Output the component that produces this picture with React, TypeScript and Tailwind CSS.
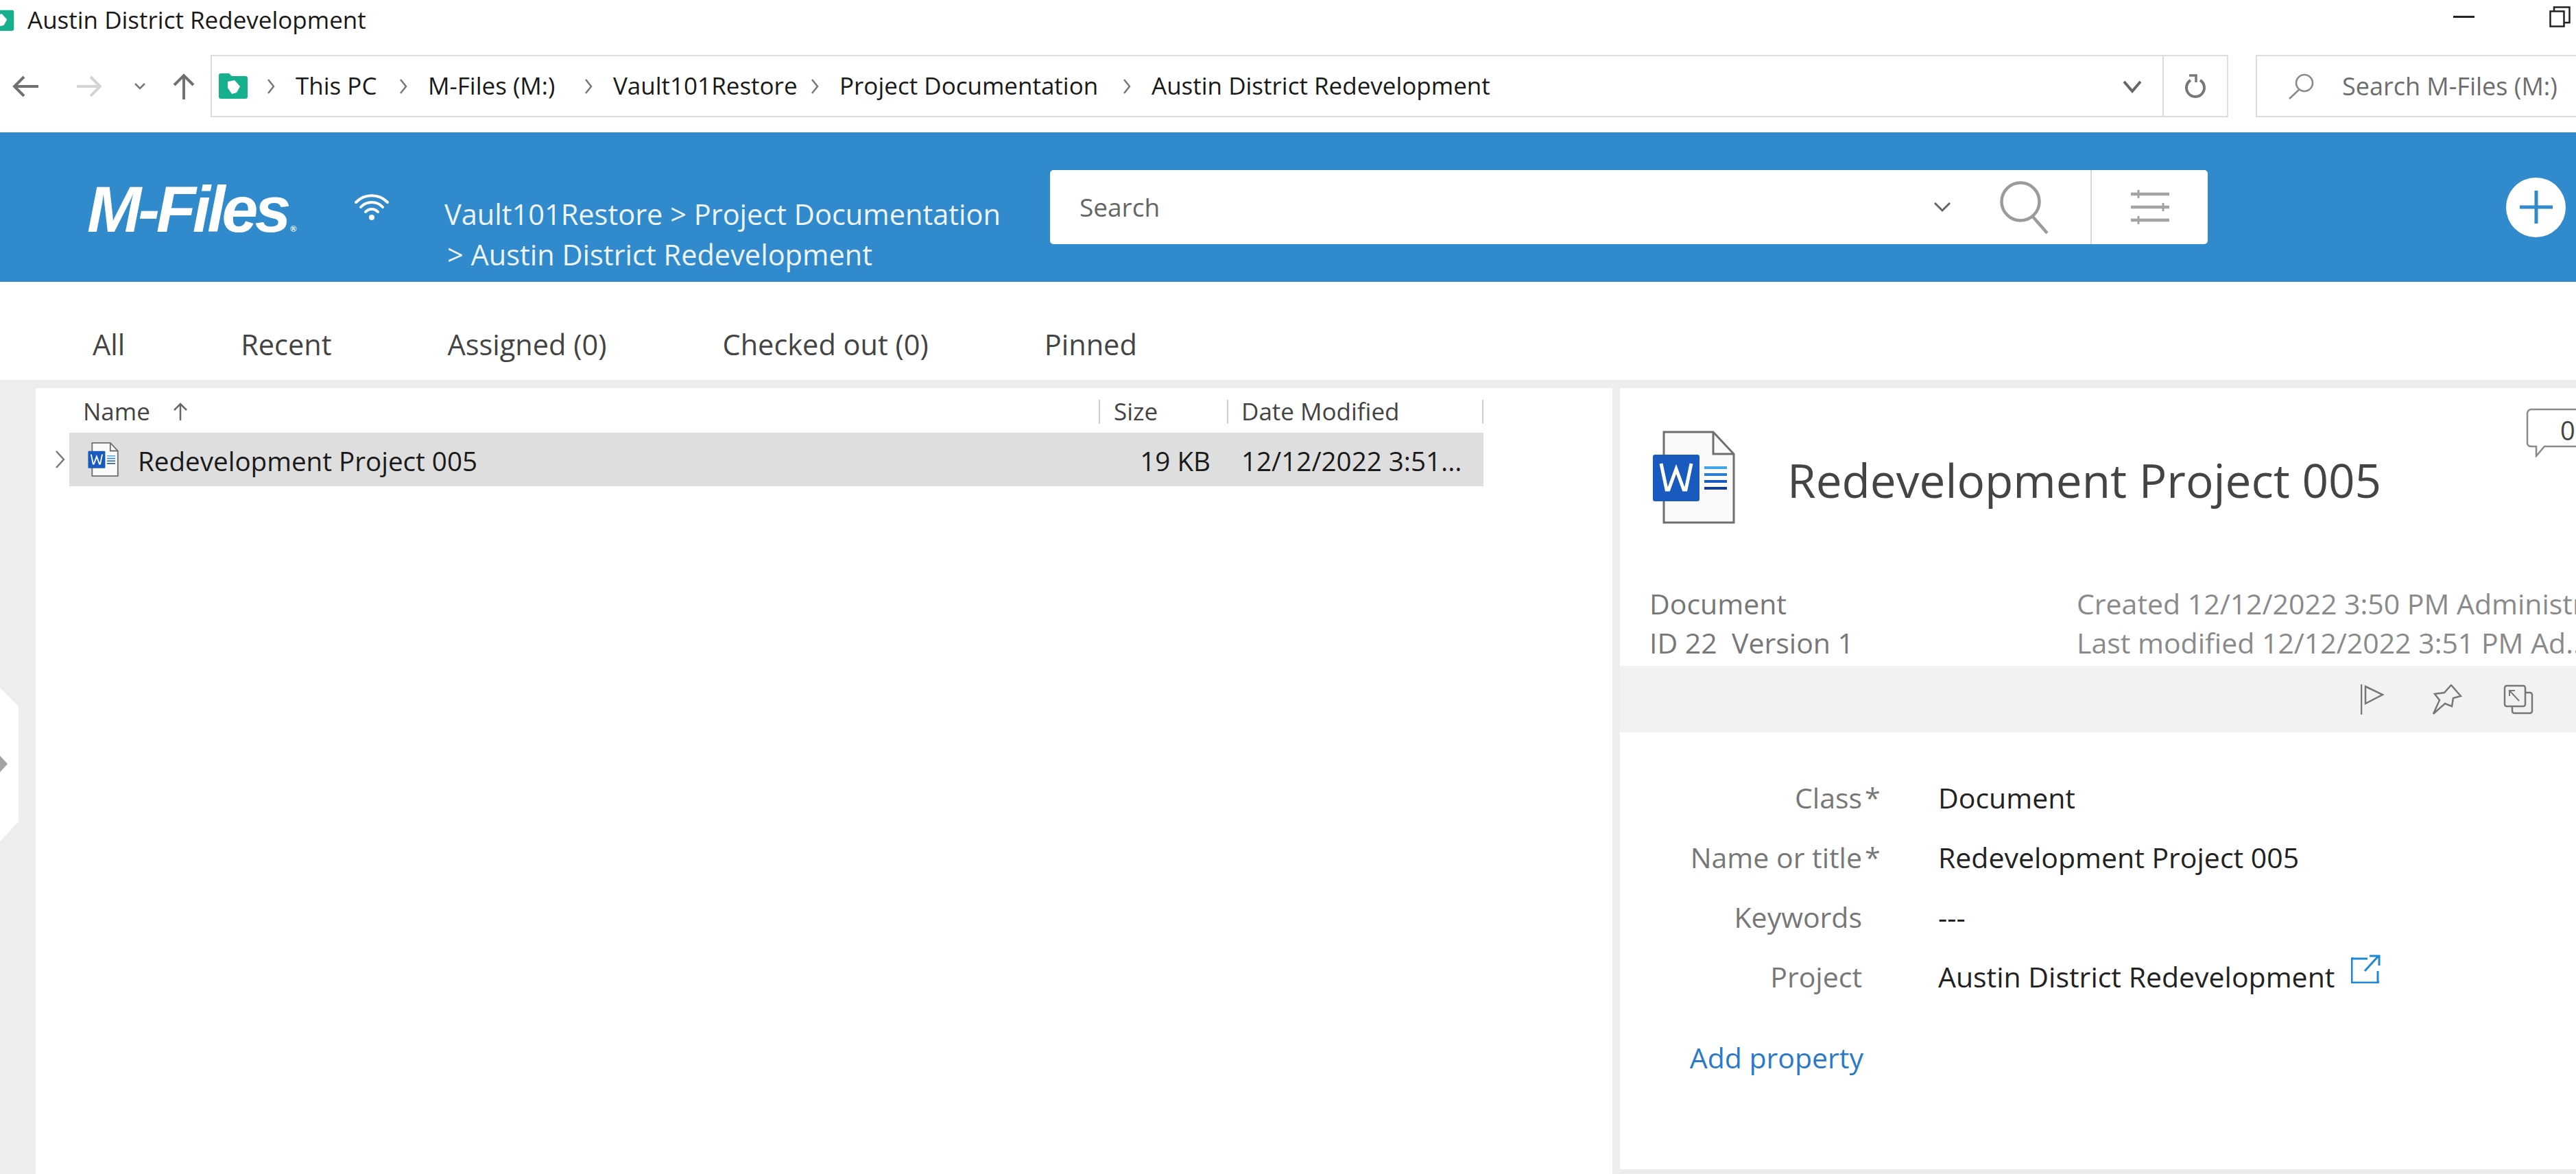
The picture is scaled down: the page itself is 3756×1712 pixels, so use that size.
const crumbs = [
  { label: "This PC", w: "w-[150px]" },
  { label: "M-Files (M:)", w: "w-[227px]" },
  { label: "Vault101Restore", w: "w-[287px]" },
  { label: "Project Documentation", w: "w-[412px]" },
  { label: "Austin District Redevelopment", w: "w-[520px]" },
];

const tabs = ["All", "Recent", "Assigned (0)", "Checked out (0)", "Pinned"];

const properties = [
  { label: "Class", value: "Document", required: true },
  { label: "Name or title", value: "Redevelopment Project 005", required: true },
  { label: "Keywords", value: "---", required: false },
  { label: "Project", value: "Austin District Redevelopment", required: false, link: true },
];

function VaultIcon({ className }: { className: string }) {
  return (
    <svg viewBox="0 0 42 37" className={className}>
      <path d="M0 3a3 3 0 0 1 3-3h12l4 4h20a3 3 0 0 1 3 3v27a3 3 0 0 1-3 3H3a3 3 0 0 1-3-3z" fill="#17b08e" />
      <path d="M13 12l10-2 8 9-5 9-7 2-6-9z" fill="#fff" />
    </svg>
  );
}

function Chevron() {
  return (
    <svg viewBox="0 0 14 26" className="h-[26px] w-[14px] shrink-0">
      <path d="M3 3l8 10-8 10" fill="none" stroke="#777" strokeWidth="2.5" />
    </svg>
  );
}

function WordIcon({ small }: { small?: boolean }) {
  return (
    <svg viewBox="0 0 120 136" className={small ? "h-[50px] w-[49px] shrink-0" : "h-[136px] w-[120px] shrink-0"}>
      <path d="M16 2h72l30 32v100H16z" fill="#fafafa" stroke="#6f6f6f" strokeWidth={small ? 5 : 3} />
      <path d="M88 2v32h30" fill="none" stroke="#6f6f6f" strokeWidth={small ? 5 : 3} />
      <rect x="0" y="35" width="68" height="68" rx="3" fill="#185abd" />
      <path d="M12 50l8 38h3l11-30 11 30h3l8-38" fill="none" stroke="#fff" strokeWidth="5" transform="translate(0 -2)" />
      <path d="M75 54h33" stroke="#41a5ee" strokeWidth="4" />
      <path d="M75 64h33" stroke="#2b7cd3" strokeWidth="4" />
      <path d="M75 74h33" stroke="#185abd" strokeWidth="4" />
      <path d="M75 84h33" stroke="#103f91" strokeWidth="4" />
    </svg>
  );
}

export default function App() {
  return (
    <div className="flex h-[1712px] w-[3756px] flex-col overflow-hidden bg-white font-['Open_Sans',sans-serif] text-[#222]">
      {/* window title */}
      <div className="flex h-[80px] shrink-0 items-start">
        <div className="flex h-[56px] w-[40px] shrink-0 items-center overflow-hidden">
          <VaultIcon className="ml-[-20px] h-[34px] w-[42px] shrink-0" />
        </div>
        <span className="flex h-[56px] items-center pt-[2px] text-[35px] whitespace-nowrap text-[#1a1a1a]">Austin District Redevelopment</span>
        <div className="ml-auto flex h-[48px] items-center">
          <div className="h-[3px] w-[31px] bg-[#222]" />
          <svg viewBox="0 0 31 31" className="mr-[8px] ml-[109px] h-[31px] w-[31px]">
            <path d="M1.5 7.5h20v22h-20zM7 7V1.5h22.5V24H22" fill="none" stroke="#222" strokeWidth="2.5" />
          </svg>
        </div>
      </div>

      {/* explorer address bar */}
      <div className="flex h-[91px] shrink-0">
        <div className="flex w-[307px] shrink-0 items-center pl-[18px]">
          <svg viewBox="0 0 38 32" className="h-[32px] w-[38px]">
            <path d="M38 16H4M17 2L3 16l14 14" fill="none" stroke="#707070" strokeWidth="4" />
          </svg>
          <svg viewBox="0 0 36 32" className="ml-[56px] h-[32px] w-[36px]">
            <path d="M0 16h33M20 2l14 14-14 14" fill="none" stroke="#d4d4d4" strokeWidth="4" />
          </svg>
          <svg viewBox="0 0 18 10" className="ml-[47px] h-[10px] w-[18px]">
            <path d="M2 1l7 7 7-7" fill="none" stroke="#777" strokeWidth="2.5" />
          </svg>
          <svg viewBox="0 0 34 38" className="ml-[38px] h-[38px] w-[34px]">
            <path d="M17 38V4M3 17L17 3l14 14" fill="none" stroke="#707070" strokeWidth="4" />
          </svg>
        </div>
        <div className="flex w-[2942px] shrink-0 items-center border-2 border-[#dcdcdc] pl-[10px]">
          <VaultIcon className="h-[37px] w-[42px] shrink-0" />
          <div className="ml-[27px] flex items-center text-[35px] whitespace-nowrap text-[#1a1a1a]">
            {crumbs.map((c) => (
              <div key={c.label} className="flex items-center">
                <Chevron />
                <span className={`ml-[29px] ${c.w}`}>{c.label}</span>
              </div>
            ))}
          </div>
          <svg viewBox="0 0 28 20" className="ml-auto h-[20px] w-[28px]">
            <path d="M2 3l12 14L26 3" fill="none" stroke="#666" strokeWidth="4" />
          </svg>
          <div className="ml-[30px] flex h-full w-[94px] items-center justify-center border-l-2 border-[#dcdcdc]">
            <svg viewBox="0 0 32 36" className="h-[36px] w-[32px]">
              <path d="M9 9a13 13 0 1 0 14 0" fill="none" stroke="#777" strokeWidth="4" />
              <path d="M7 2h10v10" fill="none" stroke="#777" strokeWidth="3.5" />
            </svg>
          </div>
        </div>
        <div className="ml-[40px] flex flex-1 items-center border-y-2 border-l-2 border-[#dcdcdc] pl-[44px]">
          <svg viewBox="0 0 40 38" className="h-[38px] w-[40px] shrink-0">
            <circle cx="25" cy="14" r="12" fill="none" stroke="#888" strokeWidth="2.5" />
            <path d="M17 24L3 37" stroke="#888" strokeWidth="2.5" />
          </svg>
          <span className="ml-[40px] text-[36px] whitespace-nowrap text-[#6d6d6d]">Search M-Files (M:)</span>
        </div>
      </div>

      <div className="h-[22px] shrink-0" />

      {/* blue header */}
      <div className="flex h-[218px] shrink-0 items-center bg-[#308acb] text-white">
        <div className="ml-[127px] flex w-[303px] shrink-0 items-baseline pt-[7px] font-['Liberation_Sans',sans-serif] text-[95px] leading-none font-bold tracking-[-5px] whitespace-nowrap italic">
          M-Files<span className="ml-[4px] text-[12px] tracking-normal">®</span>
        </div>
        <svg viewBox="0 0 52 40" className="ml-[86px] h-[40px] w-[52px] shrink-0">
          <g fill="none" stroke="#fff" strokeWidth="4" strokeLinecap="round">
            <path d="M3 13a32 32 0 0 1 46 0" />
            <path d="M10 20a22 22 0 0 1 32 0" />
            <path d="M17 27a12 12 0 0 1 18 0" />
          </g>
          <circle cx="26" cy="35" r="4" fill="#fff" />
        </svg>
        <div className="ml-[80px] w-[830px] shrink-0 self-start pt-[90px] text-[41.5px] leading-[59px] text-[#edf5fb]">
          <div className="whitespace-nowrap">Vault101Restore &gt; Project Documentation</div>
          <div className="pl-[4px] whitespace-nowrap">&gt; Austin District Redevelopment</div>
        </div>
        <div className="ml-[53px] flex h-[108px] w-[1688px] shrink-0 rounded-[5px] bg-white">
          <div className="flex flex-1 items-center pr-[60px]">
            <span className="ml-[43px] text-[37px] text-[#666]">Search</span>
            <svg viewBox="0 0 26 16" className="ml-auto h-[16px] w-[26px]">
              <path d="M2 2l11 11L24 2" fill="none" stroke="#666" strokeWidth="3" />
            </svg>
            <svg viewBox="0 0 72 77" className="ml-[71px] h-[77px] w-[72px]">
              <circle cx="30" cy="30" r="27.5" fill="none" stroke="#9b9b9b" strokeWidth="4.5" />
              <path d="M48 52l21 24" stroke="#9b9b9b" strokeWidth="4.5" />
            </svg>
          </div>
          <div className="flex h-full w-[171px] shrink-0 items-center justify-center border-l-2 border-[#d8d8d8]">
            <svg viewBox="0 0 56 50" className="h-[50px] w-[56px]">
              <g stroke="#a3a3a3" strokeWidth="4.5">
                <path d="M0 6h56M0 25h56M0 44h56" />
                <path d="M11 0v12M47 19v12M11 38v12" strokeWidth="3" />
              </g>
            </svg>
          </div>
        </div>
        <div className="ml-[435px] flex h-[87px] w-[87px] shrink-0 items-center justify-center rounded-full bg-white">
          <svg viewBox="0 0 50 50" className="h-[50px] w-[50px]">
            <path d="M25 1v48M1 25h48" stroke="#308acb" strokeWidth="5" />
          </svg>
        </div>
      </div>

      {/* tabs */}
      <div className="flex h-[143px] shrink-0 gap-[169px] pt-[70px] pl-[135px] text-[41.5px] leading-[42px] whitespace-nowrap text-[#444]">
        {tabs.map((t) => (
          <span key={t}>{t}</span>
        ))}
      </div>

      {/* content */}
      <div className="relative flex min-h-0 flex-1 bg-[#ededed] pt-[12px] pl-[52px]">
        <svg viewBox="0 0 27 224" className="absolute top-[449px] left-0 h-[224px] w-[27px]">
          <path d="M0 0l27 27v168L0 224z" fill="#fff" />
          <path d="M0 99l11 12-11 12z" fill="#a3a3a3" />
        </svg>

        <div className="w-[2299px] shrink-0 bg-white">
          <div className="ml-[49px] grid h-[65px] w-[2062px] grid-cols-[1501px_187px_374px] text-[35px] text-[#444]">
            <div className="flex items-center pt-[3px] pl-[20px]">
              <span className="w-[130px]">Name</span>
              <svg viewBox="0 0 24 26" className="h-[26px] w-[24px]">
                <path d="M12 26V3M3 11l9-9 9 9" fill="none" stroke="#666" strokeWidth="2.5" />
              </svg>
            </div>
            <div className="flex items-center pt-[3px]">
              <div className="h-[35px] w-[2px] bg-[#cfcfcf]" />
              <span className="ml-[20px]">Size</span>
            </div>
            <div className="flex items-center pt-[3px]">
              <div className="h-[35px] w-[2px] bg-[#cfcfcf]" />
              <span className="ml-[19px]">Date Modified</span>
              <div className="ml-auto h-[35px] w-[2px] bg-[#cfcfcf]" />
            </div>
          </div>
          <div className="flex h-[78px]">
            <div className="flex w-[49px] shrink-0 items-center pl-[28px]">
              <svg viewBox="0 0 16 26" className="h-[26px] w-[16px]">
                <path d="M2 1l11 12L2 25" fill="none" stroke="#777" strokeWidth="2.5" />
              </svg>
            </div>
            <div className="grid w-[2062px] grid-cols-[1501px_187px_374px] items-center bg-[#dedede] text-[38.6px] text-[#1a1a1a]">
              <div className="flex items-center pl-[25px]">
                <WordIcon small />
                <span className="ml-[26px] pt-[6px] whitespace-nowrap">Redevelopment Project 005</span>
              </div>
              <span className="pt-[6px] pr-[24px] text-right">19 KB</span>
              <span className="pt-[6px] pl-[21px] whitespace-nowrap">12/12/2022 3:51...</span>
            </div>
          </div>
        </div>

        <div className="ml-[11px] flex flex-1 flex-col bg-white">
          <div className="relative h-[405px] shrink-0 overflow-hidden pt-[62px]">
            <div className="flex items-center pl-[48px]">
              <WordIcon />
              <h1 className="ml-[76px] pt-[10px] text-[67.5px] leading-none whitespace-nowrap text-[#444]">Redevelopment Project 005</h1>
            </div>
            <svg viewBox="0 0 74 72" className="absolute top-[29px] left-[1321px] h-[72px] w-[74px]">
              <path d="M74 2H8a6 6 0 0 0-6 6v44a6 6 0 0 0 6 4h7v14l12-14h47" fill="#fff" stroke="#8a8a8a" strokeWidth="2.5" />
            </svg>
            <span className="absolute top-[37px] left-[1371px] text-[38px] leading-[48px] text-[#444]">0</span>
            <div className="mt-[88px] flex text-[41px] leading-[57px] whitespace-nowrap text-[#8a8a8a]">
              <div className="w-[666px] shrink-0 pl-[43px] text-[#777]">
                <div>Document</div>
                <div>ID 22&nbsp; Version 1</div>
              </div>
              <div>
                <div>Created 12/12/2022 3:50 PM Administrator</div>
                <div>Last modified 12/12/2022 3:51 PM Ad...</div>
              </div>
            </div>
          </div>

          <div className="flex h-[97px] shrink-0 items-center gap-[60px] bg-[#f2f2f2] pl-[1080px]">
            <svg viewBox="0 0 44 44" className="h-[44px] w-[44px]">
              <path d="M1 0v44" fill="none" stroke="#777" strokeWidth="2.5" />
              <path d="M7 3l25 12L7 28z" fill="none" stroke="#777" strokeWidth="2.5" />
            </svg>
            <svg viewBox="0 0 44 44" className="h-[44px] w-[44px]">
              <path d="M28 1l14 16-11 3-2 12-10-4-17 15 9-20-7-9 14-2z" fill="none" stroke="#777" strokeWidth="2.5" />
            </svg>
            <svg viewBox="0 0 44 44" className="h-[44px] w-[44px]">
              <rect x="2" y="2" width="30" height="30" rx="3" fill="none" stroke="#777" strokeWidth="2.5" />
              <path d="M32 12h7a3 3 0 0 1 3 3v24a3 3 0 0 1-3 3H16a3 3 0 0 1-3-3v-7" fill="none" stroke="#777" strokeWidth="2.5" />
              <path d="M9 9l14 15M9 17V9h8" fill="none" stroke="#777" strokeWidth="2" />
            </svg>
          </div>

          <div className="flex-1 pt-[52px] text-[41px] leading-[87px]">
            {properties.map((p) => (
              <div key={p.label} className="flex h-[87px] whitespace-nowrap">
                <div className="flex w-[377px] shrink-0 justify-end text-[#777]">
                  <span>{p.label}</span>
                  <span className="w-[24px] pl-[4px]">{p.required ? "*" : ""}</span>
                </div>
                <span className="ml-[87px] text-[#222]">{p.value}</span>
                {p.link && (
                  <svg viewBox="0 0 43 42" className="mt-[-24px] ml-[24px] h-[42px] w-[43px] self-center">
                    <path d="M24 6H3a1 1 0 0 0-2 1v32a1 1 0 0 0 1 2h36a1 1 0 0 0 1-2V24" fill="none" stroke="#1e88d4" strokeWidth="3" />
                    <path d="M20 24L40 2M27 2h14v14" fill="none" stroke="#1e88d4" strokeWidth="3" />
                  </svg>
                )}
              </div>
            ))}
            <div className="mt-[31px] w-[355px] text-right text-[#2a7ac8]">Add property</div>
          </div>
          <div className="h-[7px] shrink-0 bg-[#ededed]" />
        </div>
      </div>
    </div>
  );
}
